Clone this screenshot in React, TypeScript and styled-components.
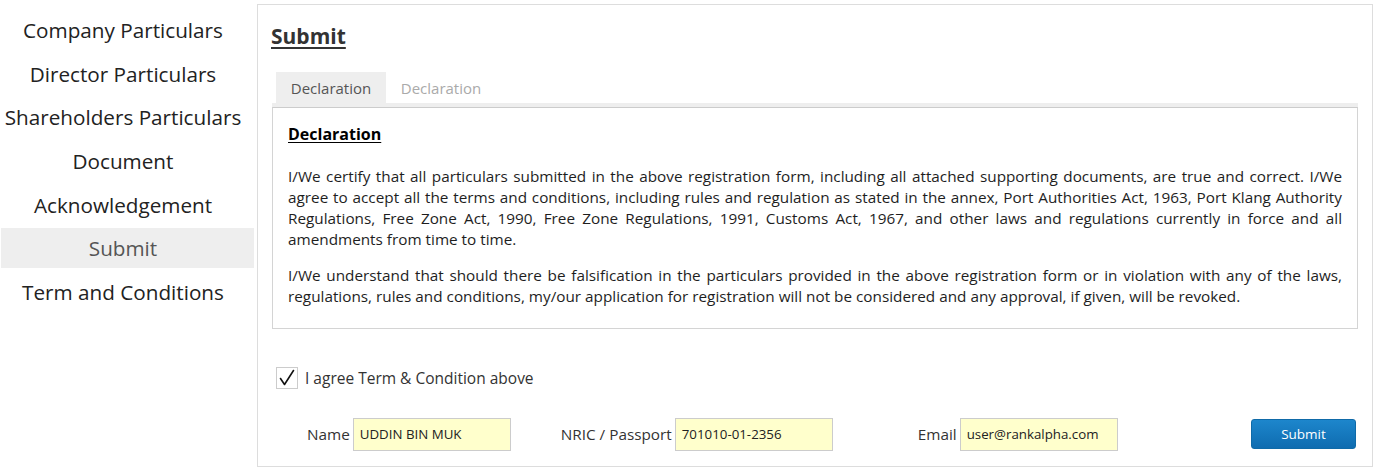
import React from "react";
import styled, { createGlobalStyle } from "styled-components";

const Global = createGlobalStyle`
  html, body { margin: 0; padding: 0; background: #fff; }
  body { font-family: "Open Sans", "Noto Sans", sans-serif; color: #333; }
  * { box-sizing: border-box; }
`;

const Page = styled.div`
  display: flex;
  align-items: flex-start;
  width: 1378px;
  height: 471px;
`;

const Sidebar = styled.nav`
  width: 257px;
  flex: none;
  display: flex;
  flex-direction: column;
  gap: 3.67px;
  padding: 10px 3px 0 1px;
`;

const NavItem = styled.div<{ $active?: boolean }>`
  height: 40px;
  display: flex;
  align-items: center;
  justify-content: center;
  padding-right: 9px;
  font-size: 20.7px;
  white-space: nowrap;
  color: ${(p) => (p.$active ? "#555" : "#222")};
  background: ${(p) => (p.$active ? "#eee" : "transparent")};
`;

const Panel = styled.main`
  margin-top: 4px;
  width: 1116px;
  height: 463px;
  border: 1px solid #ddd;
  padding: 18px 14px 0 14px;
`;

const Title = styled.h1`
  margin: 0 0 23px -1px;
  font-size: 21px;
  line-height: 26px;
  font-weight: 700;
  color: #333;
  text-decoration: underline;
  text-decoration-thickness: 2px;
  text-underline-offset: 3px;
`;

const TabBar = styled.div`
  display: flex;
  padding-left: 4px;
  border-bottom: 4px solid #eee;
`;

const Tab = styled.div<{ $active?: boolean }>`
  height: 31px;
  width: 110px;
  display: flex;
  align-items: center;
  justify-content: center;
  font-size: 15px;
  color: ${(p) => (p.$active ? "#555" : "#aaa")};
  background: ${(p) => (p.$active ? "#eee" : "transparent")};
`;

const Box = styled.section`
  border: 1px solid #d4d4d4;
  border-top-color: #ccc;
  padding: 15px 15px 20px 15px;
  height: 222px;
`;

const BoxHeading = styled.h2`
  margin: 0 0 21px;
  font-size: 16px;
  line-height: 22px;
  font-weight: 700;
  color: #000;
  text-decoration: underline;
  text-underline-offset: 2px;
`;

const Para = styled.p<{ $gap?: number }>`
  margin: 0 0 ${(p) => p.$gap ?? 0}px;
  font-size: 15.3px;
  line-height: 21px;
  text-align: justify;
  color: #1e1e1e;
`;

const AgreeRow = styled.label`
  display: flex;
  align-items: center;
  gap: 7px;
  margin: 38px 0 0 4px;
  font-size: 15.5px;
  color: #333;
`;

const CheckBox = styled.span`
  width: 22px;
  height: 22px;
  border: 1px solid #ccc;
  background: #fff;
  display: flex;
  align-items: center;
  justify-content: center;
`;

const FormRow = styled.div`
  display: flex;
  align-items: center;
  margin-top: 28px;
  height: 34px;
`;

const Field = styled.div<{ $ml: number }>`
  display: flex;
  align-items: center;
  gap: 3px;
  margin-left: ${(p) => p.$ml}px;
`;

const Label = styled.span`
  font-size: 15.3px;
  color: #333;
  white-space: nowrap;
`;

const Input = styled.div`
  width: 158px;
  height: 33px;
  border: 1px solid #ccc;
  background: #ffffcc;
  display: flex;
  align-items: center;
  padding-left: 6px;
  font-size: 13.3px;
  color: #222;
  white-space: nowrap;
`;

const Button = styled.button`
  margin-left: auto;
  width: 105px;
  height: 30px;
  border: 1px solid #0f6aa8;
  border-radius: 3px;
  background: linear-gradient(#1d86cc, #0f6cb0);
  color: #fff;
  font-family: inherit;
  font-size: 13.5px;
  margin-right: 2px;
`;

const nav = [
  "Company Particulars",
  "Director Particulars",
  "Shareholders Particulars",
  "Document",
  "Acknowledgement",
  "Submit",
  "Term and Conditions",
];

export default function App() {
  return (
    <>
      <Global />
      <Page>
        <Sidebar>
          {nav.map((n) => (
            <NavItem key={n} $active={n === "Submit"}>
              {n}
            </NavItem>
          ))}
        </Sidebar>
        <Panel>
          <Title>Submit</Title>
          <TabBar>
            <Tab $active>Declaration</Tab>
            <Tab>Declaration</Tab>
          </TabBar>
          <Box>
            <BoxHeading>Declaration</BoxHeading>
            <Para $gap={15}>
              I/We certify that all particulars submitted in the above registration form, including all attached
              supporting documents, are true and correct. I/We agree to accept all the terms and conditions, including
              rules and regulation as stated in the annex, Port Authorities Act, 1963, Port Klang Authority
              Regulations, Free Zone Act, 1990, Free Zone Regulations, 1991, Customs Act, 1967, and other laws and
              regulations currently in force and all amendments from time to time.
            </Para>
            <Para>
              I/We understand that should there be falsification in the particulars provided in the above registration
              form or in violation with any of the laws, regulations, rules and conditions, my/our application for
              registration will not be considered and any approval, if given, will be revoked.
            </Para>
          </Box>
          <AgreeRow>
            <CheckBox>
              <svg width="20" height="20" viewBox="0 0 20 20">
                <path d="M3.5 10.5 L7.5 16.5 L16.5 2.5" fill="none" stroke="#111" strokeWidth="1.6" strokeLinecap="round" strokeLinejoin="round" />
              </svg>
            </CheckBox>
            I agree Term &amp; Condition above
          </AgreeRow>
          <FormRow>
            <Field $ml={35}>
              <Label>Name</Label>
              <Input>UDDIN BIN MUK</Input>
            </Field>
            <Field $ml={50}>
              <Label>NRIC / Passport</Label>
              <Input>701010-01-2356</Input>
            </Field>
            <Field $ml={85}>
              <Label>Email</Label>
              <Input>user@rankalpha.com</Input>
            </Field>
            <Button>Submit</Button>
          </FormRow>
        </Panel>
      </Page>
    </>
  );
}
